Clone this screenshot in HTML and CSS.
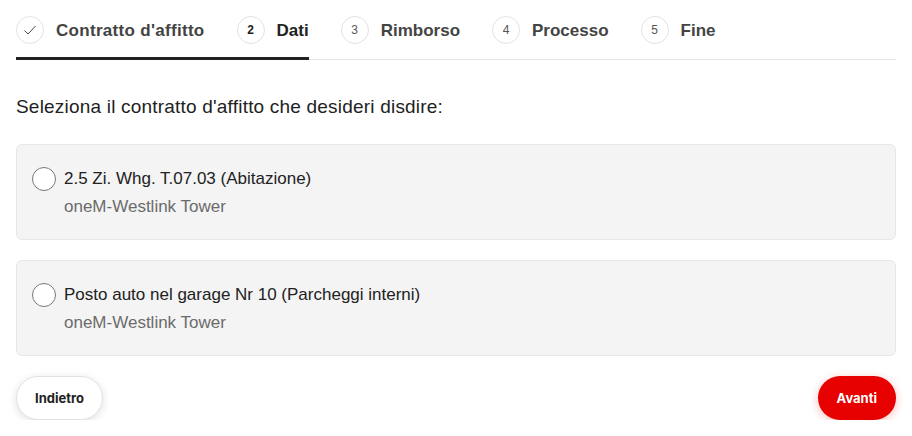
FILE: index.html
```html
<!DOCTYPE html>
<html>
  <head>
    <title>Disdetta contratto</title>
    <link rel="stylesheet" href="styles.css">
  </head>
  <body>
    <div class="page">
      <div class="steps">
        <div class="step done">
          <span class="step-circle">
            <svg width="14" height="14" viewBox="0 0 14 14"><path d="M1.5 7.5 L5 11 L12.5 3" fill="none" stroke="#444" stroke-width="1"/></svg>
          </span>
          <span class="step-label">Contratto d'affitto</span>
        </div>
        <div class="step active">
          <span class="step-circle">2</span>
          <span class="step-label">Dati</span>
        </div>
        <div class="step">
          <span class="step-circle">3</span>
          <span class="step-label">Rimborso</span>
        </div>
        <div class="step">
          <span class="step-circle">4</span>
          <span class="step-label">Processo</span>
        </div>
        <div class="step">
          <span class="step-circle">5</span>
          <span class="step-label">Fine</span>
        </div>
      </div>

      <p class="question">Seleziona il contratto d'affitto che desideri disdire:</p>

      <label class="contract">
        <span class="radio"></span>
        <span class="contract-text">
          <span class="contract-title">2.5 Zi. Whg. T.07.03 (Abitazione)</span>
          <span class="contract-place">oneM-Westlink Tower</span>
        </span>
      </label>

      <label class="contract">
        <span class="radio"></span>
        <span class="contract-text">
          <span class="contract-title">Posto auto nel garage Nr 10 (Parcheggi interni)</span>
          <span class="contract-place">oneM-Westlink Tower</span>
        </span>
      </label>

      <div class="actions">
        <button class="btn btn-back">Indietro</button>
        <button class="btn btn-next">Avanti</button>
      </div>
    </div>
  </body>
</html>
```

FILE: styles.css
```css
body{
  margin: 0;
  background-color: white;
  font-family: "Liberation Sans", Arial, sans-serif;
  color: #222;
}

.page{
  padding: 0 16px;
}

/* stepper */
.steps{
  display: flex;
  border-bottom: 1px solid #e4e4e4;
}

.step{
  display: flex;
  align-items: center;
  column-gap: 12px;
  padding: 16px 0 13px 0;
  margin-bottom: -1px;
  border-bottom: 3px solid transparent;
  margin-right: 32px;
}

.step.done{
  margin-right: 0;
  padding-right: 32px;
  border-bottom-color: #222;
}

.step.active{
  border-bottom-color: #222;
}

.step-circle{
  width: 26px;
  height: 26px;
  border: 1px solid #e2e2e2;
  border-radius: 50%;
  display: flex;
  justify-content: center;
  align-items: center;
  font-size: 12px;
  color: #555;
}

.step.active .step-circle{
  color: #222;
  font-weight: bold;
}

.step-label{
  padding-top: 1px;
  font-size: 17px;
  font-weight: bold;
  color: #444;
}

.step.done .step-label{
  letter-spacing: .3px;
}

.step.active .step-label{
  color: #222;
}

/* question */
.question{
  margin: 35px 0 25px 0;
  font-size: 19px;
  letter-spacing: .2px;
  line-height: 24px;
  color: #222;
}

/* contracts */
.contract{
  display: flex;
  align-items: flex-start;
  column-gap: 8px;
  padding: 20px 15px 18px 15px;
  margin-bottom: 20px;
  background-color: #f4f4f4;
  border: 1px solid #e6e6e6;
  border-radius: 6px;
  cursor: pointer;
}

.radio{
  width: 22px;
  height: 22px;
  margin-top: 2px;
  border: 1px solid #777;
  border-radius: 50%;
  background-color: white;
  flex-shrink: 0;
}

.contract-text{
  display: flex;
  flex-direction: column;
  font-size: 17px;
  line-height: 28px;
}

.contract-title{
  color: #222;
}

.contract-place{
  color: #6b6b6b;
}

/* buttons */
.actions{
  display: flex;
  justify-content: space-between;
}

.btn{
  height: 44px;
  padding: 0 19px;
  border-radius: 22px;
  font-family: Inter, "Liberation Sans", sans-serif;
  font-size: 13px;
  font-weight: bold;
  cursor: pointer;
}

.btn-back{
  padding: 0 18px;
  background-color: white;
  color: #222;
  border: 1px solid #e2e2e2;
  box-shadow: 0 2px 8px rgba(0, 0, 0, .12);
}

.btn-next{
  background-color: #e60000;
  color: white;
  border: none;
  box-shadow: 0 2px 10px rgba(230, 0, 0, .25);
}
```
